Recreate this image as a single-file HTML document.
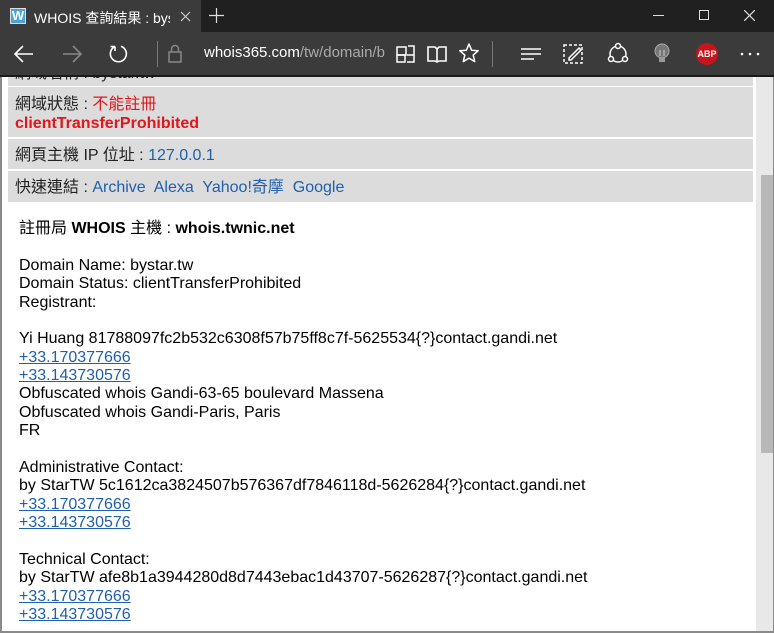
<!DOCTYPE html>
<html><head><meta charset="utf-8"><style>
*{margin:0;padding:0;box-sizing:border-box}
body{width:774px;height:633px;overflow:hidden;background:#fff;font-family:"Liberation Sans","Noto Sans CJK TC",sans-serif;position:relative}
.title{position:absolute;left:0;top:0;width:774px;height:32px;background:#202020}
.tab{position:absolute;left:0;top:0;width:201px;height:32px;background:#3b3b3b;color:#fff;font-size:14px}
.nav{position:absolute;left:0;top:32px;width:774px;height:43px;background:#3b3b3b}
.navline{position:absolute;left:0;top:75px;width:774px;height:2px;background:#1a1a1a}
.ic{position:absolute}
.row{position:absolute;left:8px;width:745px;background:#dcdcdc;font-size:16px;color:#222;padding-left:7px;overflow:hidden}
a{color:#1f5fae}
.c{position:absolute;left:19px;top:220px;font-size:16px;line-height:18.37px;color:#000;white-space:pre}
.c a{text-decoration:underline}
</style></head><body>
<div class="title"></div>
<div class="tab">
 <div style="position:absolute;left:10px;top:8px;width:16px;height:16px;background:#4aa3d8;border:1px solid #ddd;color:#fff;font-weight:bold;font-size:13px;line-height:14px;text-align:center">W</div>
 <div style="position:absolute;left:34px;top:8px;white-space:nowrap;width:136px;overflow:hidden">WHOIS 查詢結果 : bystar</div>
 <svg class="ic" style="left:180px;top:11px" width="11" height="11" viewBox="0 0 11 11"><path d="M1 1l9 9M10 1l-9 9" stroke="#ccc" stroke-width="1.2"/></svg>
</div>
<svg class="ic" style="left:209px;top:8px" width="15" height="15" viewBox="0 0 15 15"><path d="M7.5 0v15M0 7.5h15" stroke="#ddd" stroke-width="1.2"/></svg>
<div style="position:absolute;left:653px;top:15px;width:11px;height:1px;background:#ddd"></div>
<div style="position:absolute;left:699px;top:10px;width:10px;height:10px;border:1px solid #ddd"></div>
<svg class="ic" style="left:744px;top:10px" width="11" height="11" viewBox="0 0 11 11"><path d="M0 0l11 11M11 0L0 11" stroke="#ddd" stroke-width="1.2"/></svg>
<div class="nav">
 <svg class="ic" style="left:12px;top:10px" width="24" height="24" viewBox="0 0 24 24"><path d="M21 12H3M11 4l-8 8 8 8" stroke="#fff" stroke-width="1.6" fill="none"/></svg>
 <svg class="ic" style="left:60px;top:10px" width="24" height="24" viewBox="0 0 24 24"><path d="M3 12h18M13 4l8 8-8 8" stroke="#888" stroke-width="1.6" fill="none"/></svg>
 <svg class="ic" style="left:107px;top:10px" width="24" height="24" viewBox="0 0 24 24"><path d="M8 4.5A8 8 0 1 0 14 4.2M8 4.5V9M8 4.5H3.5" stroke="#fff" stroke-width="1.6" fill="none"/></svg>
 <div style="position:absolute;left:157px;top:9px;width:1px;height:26px;background:#777"></div>
 <svg class="ic" style="left:167px;top:11px" width="16" height="22" viewBox="0 0 16 22"><rect x="2" y="9" width="12" height="10" fill="none" stroke="#888" stroke-width="1.5"/><path d="M4.5 9V6a3.5 3.5 0 0 1 7 0v3" fill="none" stroke="#888" stroke-width="1.5"/></svg>
 <div style="position:absolute;left:204px;top:12px;font-size:15px;color:#fff;white-space:nowrap">whois365.com<span style="color:#aaa">/tw/domain/b</span></div>
 <svg class="ic" style="left:395px;top:11px" width="22" height="22" viewBox="0 0 22 22"><rect x="2" y="4" width="9" height="8" fill="none" stroke="#fff" stroke-width="1.5"/><rect x="2" y="12" width="8" height="7" fill="none" stroke="#fff" stroke-width="1.5"/><path d="M13 3h6v9M12 12h7v7h-7" fill="none" stroke="#fff" stroke-width="1.5"/></svg>
 <svg class="ic" style="left:426px;top:11px" width="22" height="22" viewBox="0 0 22 22"><path d="M2 4h7l2 2 2-2h7v14h-7l-2 1-2-1H2z M11 6v13" fill="none" stroke="#fff" stroke-width="1.6"/></svg>
 <svg class="ic" style="left:458px;top:10px" width="22" height="22" viewBox="0 0 22 22"><path d="M11 2l2.6 6.2 6.6.5-5 4.4 1.5 6.5L11 16.1 5.3 19.6l1.5-6.5-5-4.4 6.6-.5z" fill="none" stroke="#fff" stroke-width="1.5" stroke-linejoin="round"/></svg>
 <div style="position:absolute;left:492px;top:9px;width:1px;height:26px;background:#777"></div>
 <svg class="ic" style="left:520px;top:12px" width="22" height="20" viewBox="0 0 22 20"><path d="M1 5h20M1 10h20M1 15h13" stroke="#fff" stroke-width="1.4"/></svg>
 <svg class="ic" style="left:562px;top:11px" width="22" height="22" viewBox="0 0 22 22"><rect x="2" y="2" width="18" height="18" fill="none" stroke="#fff" stroke-width="1.5" stroke-dasharray="3 2"/><path d="M7 15l10-10 2 2-10 10H7z" fill="none" stroke="#fff" stroke-width="1.5"/></svg>
 <svg class="ic" style="left:606px;top:10px" width="24" height="24" viewBox="0 0 24 24"><circle cx="12" cy="12" r="8" fill="none" stroke="#fff" stroke-width="1.5"/><circle cx="12" cy="4" r="2.5" fill="#3b3b3b" stroke="#fff" stroke-width="1.5"/><circle cx="5" cy="17" r="2.5" fill="#3b3b3b" stroke="#fff" stroke-width="1.5"/><circle cx="19" cy="17" r="2.5" fill="#3b3b3b" stroke="#fff" stroke-width="1.5"/></svg>
 <svg class="ic" style="left:652px;top:10px" width="20" height="24" viewBox="0 0 20 24"><circle cx="10" cy="9" r="7" fill="#777" stroke="#aaa"/><rect x="7" y="15" width="6" height="5" fill="#999"/><path d="M8 8v6M12 8v6" stroke="#ccc"/></svg>
 <div style="position:absolute;left:696px;top:11px;width:22px;height:22px;border-radius:50%;background:#c8141c;color:#fff;font-size:9px;font-weight:bold;line-height:22px;text-align:center">ABP</div>
 <svg class="ic" style="left:740px;top:20px" width="20" height="4" viewBox="0 0 20 4"><circle cx="2" cy="2" r="1.3" fill="#fff"/><circle cx="10" cy="2" r="1.3" fill="#fff"/><circle cx="18" cy="2" r="1.3" fill="#fff"/></svg>
</div>
<div class="navline"></div>
<div style="position:absolute;left:0;top:77px;width:2px;height:556px;background:#8a8a8a"></div>
<div style="position:absolute;right:0;top:77px;width:1px;height:556px;background:#8a8a8a"></div>
<div style="position:absolute;left:0;top:631px;width:774px;height:2px;background:#8a8a8a"></div>
<div class="row" style="top:77px;height:9px"><div style="position:absolute;left:7px;top:-12px;line-height:18px">網域名稱 : bystar.tw</div></div>
<div class="row" style="top:87px;height:50px;line-height:19px;padding-top:8px">網域狀態 : <span style="color:#e0161b">不能註冊</span><br><b style="color:#e0161b">clientTransferProhibited</b></div>
<div class="row" style="top:139px;height:30px;line-height:33px">網頁主機 IP 位址 : <a style="text-decoration:none">127.0.0.1</a></div>
<div class="row" style="top:171px;height:31px;line-height:34px">快速連結 : <a style="text-decoration:none">Archive</a>&nbsp; <a style="text-decoration:none">Alexa</a>&nbsp; <a style="text-decoration:none">Yahoo!奇摩</a>&nbsp; <a style="text-decoration:none">Google</a></div>
<div style="position:absolute;left:756px;top:77px;width:17px;height:554px;background:#e8e8e8"></div>
<div style="position:absolute;left:761px;top:175px;width:12px;height:278px;background:#b8b8b8"></div>
<div class="c"><span style="position:relative;top:0px">註冊局 <b>WHOIS</b> 主機 : <b>whois.twnic.net</b></span>

Domain Name: bystar.tw
Domain Status: clientTransferProhibited
Registrant:

Yi Huang 81788097fc2b532c6308f57b75ff8c7f-5625534{?}contact.gandi.net
<a>+33.170377666</a>
<a>+33.143730576</a>
Obfuscated whois Gandi-63-65 boulevard Massena
Obfuscated whois Gandi-Paris, Paris
FR

Administrative Contact:
by StarTW 5c1612ca3824507b576367df7846118d-5626284{?}contact.gandi.net
<a>+33.170377666</a>
<a>+33.143730576</a>

Technical Contact:
by StarTW afe8b1a3944280d8d7443ebac1d43707-5626287{?}contact.gandi.net
<a>+33.170377666</a>
<a>+33.143730576</a></div>
</body></html>
